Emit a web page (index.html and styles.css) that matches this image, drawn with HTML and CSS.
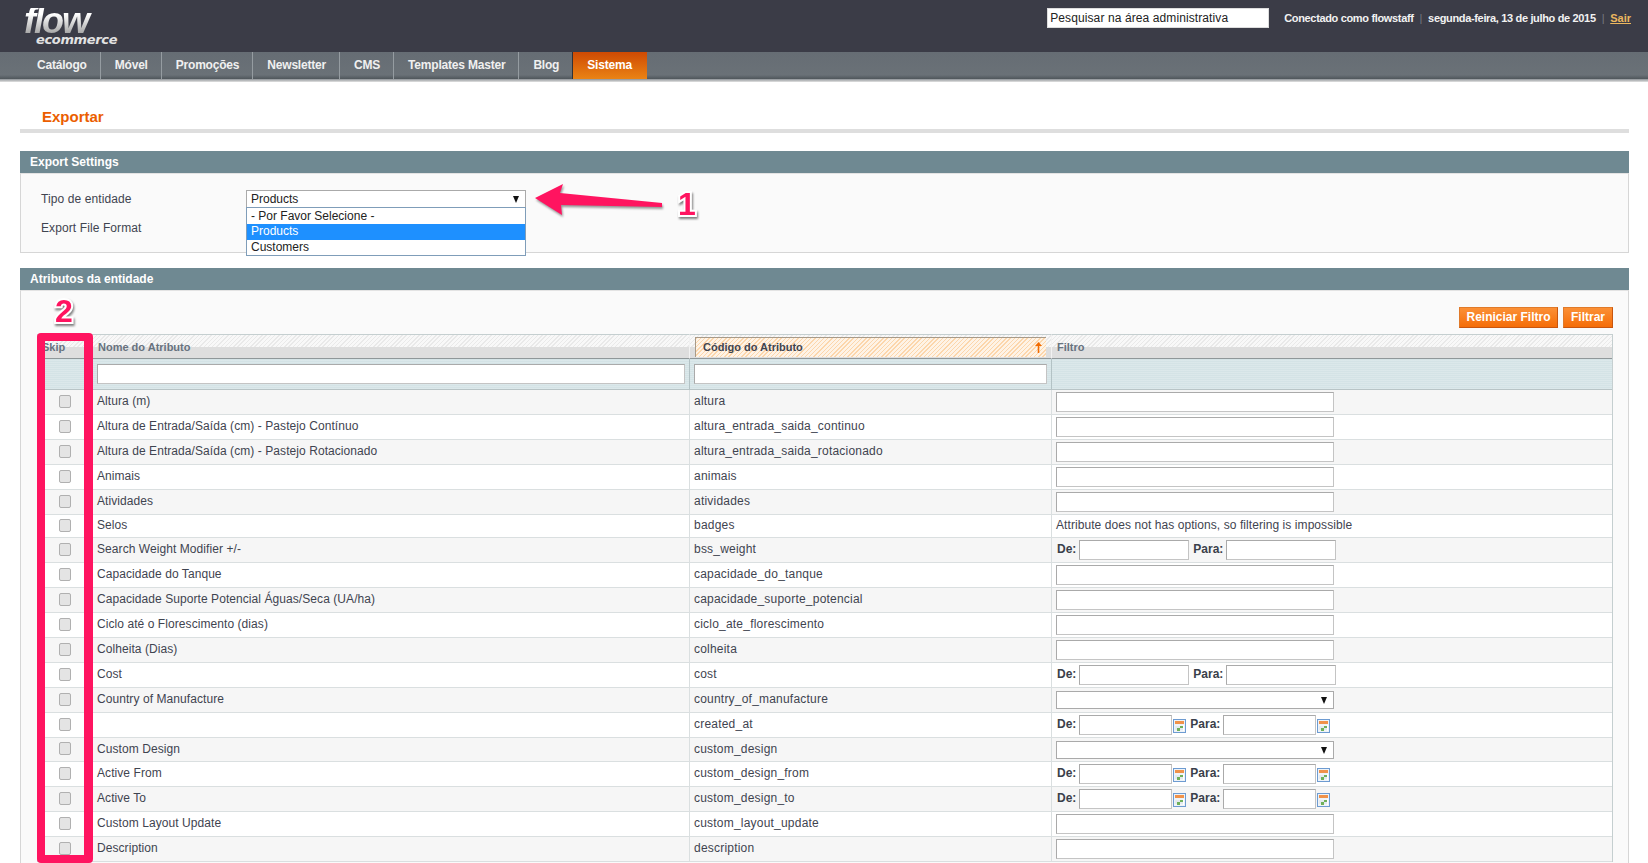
FILE: index.html
```html
<!DOCTYPE html>
<html lang="pt-BR">
<head>
<meta charset="utf-8">
<title>Exportar</title>
<link rel="stylesheet" href="styles.css">
</head>
<body>
<header class="topbar">
  <div class="logo"><span class="logo-flow">flow</span><span class="logo-sub">ecommerce</span></div>
  <div class="top-right">
    <input class="search" type="text" value="Pesquisar na área administrativa">
    <div class="user-info">
      <span>Conectado como flowstaff</span><i class="pipe">|</i><span>segunda-feira, 13 de julho de 2015</span><i class="pipe">|</i><a class="logout" href="#">Sair</a>
    </div>
  </div>
</header>
<nav class="nav">
  <a class="nav-item" href="#">Catálogo</a>
  <a class="nav-item" href="#">Móvel</a>
  <a class="nav-item" href="#">Promoções</a>
  <a class="nav-item" href="#">Newsletter</a>
  <a class="nav-item" href="#">CMS</a>
  <a class="nav-item" href="#">Templates Master</a>
  <a class="nav-item nav-last" href="#">Blog</a>
  <a class="nav-item nav-active" href="#">Sistema</a>
</nav>
<div class="nav-rule"></div>

<main class="main">
  <h1 class="title">Exportar</h1>

  <section class="panel">
    <h2 class="panel-head">Export Settings</h2>
    <div class="panel-body settings">
      <label class="field-label">Tipo de entidade</label>
      <div class="select-box">
        <span class="sel sel-wide">Products</span>
        <ul class="dropdown">
          <li>- Por Favor Selecione -</li>
          <li class="selected">Products</li>
          <li>Customers</li>
        </ul>
      </div>
      <label class="field-label">Export File Format</label>
      <div class="select-box"><span class="sel sel-wide"></span></div>
    </div>
  </section>

  <section class="panel">
    <h2 class="panel-head">Atributos da entidade</h2>
    <div class="panel-body attrs">
      <div class="actions">
        <button class="btn btn-reset">Reiniciar Filtro</button>
        <button class="btn btn-filter">Filtrar</button>
      </div>
      <table class="grid">
        <colgroup><col class="c1"><col class="c2"><col class="c3"><col class="c4"></colgroup>
        <thead>
          <tr class="heads">
            <th>Skip</th>
            <th>Nome do Atributo</th>
            <th class="sorted"><div class="sorted-in"><span>Código do Atributo</span><svg class="sort-arrow" width="7" height="11" viewBox="0 0 7 11"><path d="M3.5 0 7 4H4.3v7H2.7V4H0z" fill="#f26b00"/></svg></div></th>
            <th>Filtro</th>
          </tr>
          <tr class="filters">
            <th></th>
            <th><input class="inp inp-full" type="text"></th>
            <th><input class="inp inp-full" type="text"></th>
            <th></th>
          </tr>
        </thead>
        <tbody>
          <tr class="odd"><td class="ck"><input type="checkbox" class="cb"></td><td>Altura (m)</td><td class="code">altura</td><td><input class="inp inp-f" type="text"></td></tr>
          <tr><td class="ck"><input type="checkbox" class="cb"></td><td>Altura de Entrada/Saída (cm) - Pastejo Contínuo</td><td class="code">altura_entrada_saida_continuo</td><td><input class="inp inp-f" type="text"></td></tr>
          <tr class="odd"><td class="ck"><input type="checkbox" class="cb"></td><td>Altura de Entrada/Saída (cm) - Pastejo Rotacionado</td><td class="code">altura_entrada_saida_rotacionado</td><td><input class="inp inp-f" type="text"></td></tr>
          <tr><td class="ck"><input type="checkbox" class="cb"></td><td>Animais</td><td class="code">animais</td><td><input class="inp inp-f" type="text"></td></tr>
          <tr class="odd"><td class="ck"><input type="checkbox" class="cb"></td><td>Atividades</td><td class="code">atividades</td><td><input class="inp inp-f" type="text"></td></tr>
          <tr class="h23"><td class="ck"><input type="checkbox" class="cb"></td><td>Selos</td><td class="code">badges</td><td>Attribute does not has options, so filtering is impossible</td></tr>
          <tr class="odd"><td class="ck"><input type="checkbox" class="cb"></td><td>Search Weight Modifier +/-</td><td class="code">bss_weight</td><td><div class="range"><b>De:</b><input class="inp inp-num" type="text"><b class="para">Para:</b><input class="inp inp-num" type="text"></div></td></tr>
          <tr><td class="ck"><input type="checkbox" class="cb"></td><td>Capacidade do Tanque</td><td class="code">capacidade_do_tanque</td><td><input class="inp inp-f" type="text"></td></tr>
          <tr class="odd"><td class="ck"><input type="checkbox" class="cb"></td><td>Capacidade Suporte Potencial Águas/Seca (UA/ha)</td><td class="code">capacidade_suporte_potencial</td><td><input class="inp inp-f" type="text"></td></tr>
          <tr><td class="ck"><input type="checkbox" class="cb"></td><td>Ciclo até o Florescimento (dias)</td><td class="code">ciclo_ate_florescimento</td><td><input class="inp inp-f" type="text"></td></tr>
          <tr class="odd"><td class="ck"><input type="checkbox" class="cb"></td><td>Colheita (Dias)</td><td class="code">colheita</td><td><input class="inp inp-f" type="text"></td></tr>
          <tr><td class="ck"><input type="checkbox" class="cb"></td><td>Cost</td><td class="code">cost</td><td><div class="range"><b>De:</b><input class="inp inp-num" type="text"><b class="para">Para:</b><input class="inp inp-num" type="text"></div></td></tr>
          <tr class="odd"><td class="ck"><input type="checkbox" class="cb"></td><td>Country of Manufacture</td><td class="code">country_of_manufacture</td><td><span class="sel sel-f"></span></td></tr>
          <tr class="h24"><td class="ck"><input type="checkbox" class="cb"></td><td></td><td class="code">created_at</td><td><div class="range"><b>De:</b><input class="inp inp-date" type="text"><svg class="cal" viewBox="0 0 13 14"><use href="#cal"/></svg><b class="para">Para:</b><input class="inp inp-date" type="text"><svg class="cal" viewBox="0 0 13 14"><use href="#cal"/></svg></div></td></tr>
          <tr class="odd h24"><td class="ck"><input type="checkbox" class="cb"></td><td>Custom Design</td><td class="code">custom_design</td><td><span class="sel sel-f"></span></td></tr>
          <tr><td class="ck"><input type="checkbox" class="cb"></td><td>Active From</td><td class="code">custom_design_from</td><td><div class="range"><b>De:</b><input class="inp inp-date" type="text"><svg class="cal" viewBox="0 0 13 14"><use href="#cal"/></svg><b class="para">Para:</b><input class="inp inp-date" type="text"><svg class="cal" viewBox="0 0 13 14"><use href="#cal"/></svg></div></td></tr>
          <tr class="odd"><td class="ck"><input type="checkbox" class="cb"></td><td>Active To</td><td class="code">custom_design_to</td><td><div class="range"><b>De:</b><input class="inp inp-date" type="text"><svg class="cal" viewBox="0 0 13 14"><use href="#cal"/></svg><b class="para">Para:</b><input class="inp inp-date" type="text"><svg class="cal" viewBox="0 0 13 14"><use href="#cal"/></svg></div></td></tr>
          <tr><td class="ck"><input type="checkbox" class="cb"></td><td>Custom Layout Update</td><td class="code">custom_layout_update</td><td><input class="inp inp-f" type="text"></td></tr>
          <tr class="odd"><td class="ck"><input type="checkbox" class="cb"></td><td>Description</td><td class="code">description</td><td><input class="inp inp-f" type="text"></td></tr>
        </tbody>
      </table>
    </div>
  </section>
</main>

<svg class="sprite" width="0" height="0">
  <symbol id="cal" viewBox="0 0 13 14">
    <rect x=".5" y=".5" width="12" height="13" fill="#eef3f8" stroke="#6d9bd1"/>
    <rect x="2" y="2" width="9" height="3" fill="#f0924a"/>
    <rect x="2" y="6" width="9" height="6" fill="#fff"/>
    <path d="M3 6.5v5M5 6.5v5M7 6.5v5M9 6.5v5" stroke="#c8d4de" stroke-width="1"/>
    <rect x="7" y="7" width="3" height="2" fill="#6fb05a"/>
    <rect x="4" y="9" width="3" height="3" fill="#6fb05a"/>
  </symbol>
</svg>

<svg class="note-arrow" width="132" height="36" viewBox="0 0 132 36">
  <path d="M1 15 29 1 26 10 128 20 128 24 27 22 28 32Z" fill="#ff1460"/>
</svg>
<span class="note-num note-1">1</span>
<span class="note-num note-2">2</span>
<div class="note-frame"></div>
</body>
</html>
```

FILE: styles.css
```css
* { box-sizing: border-box; }
html, body { margin: 0; height: 863px; overflow: hidden; }
body {
  position: relative;
  background: #fff;
  font: 12px/16px "Liberation Sans", Arial, sans-serif;
  color: #3f4450;
}

/* top bar */
.topbar {
  height: 52px;
  background: #3b3c47;
  display: flex;
  justify-content: space-between;
  align-items: flex-start;
  padding: 8px 17px 0 24px;
}
.logo { width: 96px; }
.logo-flow {
  display: block;
  font: italic 700 36px/25px "Liberation Sans", Arial, sans-serif;
  letter-spacing: -2px;
  background: linear-gradient(#fff 25%, #a8a8a8 100%);
  -webkit-background-clip: text;
  background-clip: text;
  color: transparent;
}
.logo-sub {
  display: block;
  margin: 1px 0 0 12px;
  font: italic 700 13px/11px "DejaVu Sans", sans-serif;
  letter-spacing: -.35px;
  color: #e2e2e2;
}
.top-right { display: flex; align-items: center; gap: 15px; }
.search {
  width: 222px;
  height: 20px;
  padding: 0 2px;
  border: 1px solid #ddd;
  background: #fff;
  color: #222;
  font: 12px "Liberation Sans", Arial, sans-serif;
  letter-spacing: .1px;
}
.user-info { font-size: 11px; font-weight: 700; color: #f2f2f2; letter-spacing: -.34px; }
.pipe { font-style: normal; font-weight: 400; color: #77787f; margin: 0 6px; }
.logout { color: #ebb75f; letter-spacing: 0; }

/* nav */
.nav {
  height: 27px;
  display: flex;
  padding-left: 23px;
  background: linear-gradient(#666d74, #6a7177 85%, #4f565b);
}
.nav-item {
  padding: 0 13px 0 14px;
  line-height: 27px;
  font-weight: 700;
  letter-spacing: -.2px;
  color: #f0f0f0;
  text-decoration: none;
  border-right: 1px solid #959ca1;
}
.nav-last { border-right: 1px solid #2f3238; }
.nav-active {
  width: 74px;
  border: 0;
  color: #fff;
  background: linear-gradient(#cf4a03, #ea8314);
}
.nav-rule { height: 3px; background: linear-gradient(#8d9296, #e2e2e2); }

/* main */
.main { padding: 0 19px 0 20px; }
.title {
  margin: 0 0 18px;
  height: 51px;
  padding: 26px 0 0 22px;
  font-size: 15px;
  line-height: 18px;
  font-weight: 700;
  color: #eb5e00;
  border-bottom: 4px solid #dedede;
}
.panel { margin-bottom: 15px; }
.panel-head {
  margin: 0;
  height: 22px;
  padding-left: 10px;
  background: #6f8992;
  color: #fff;
  font-size: 12px;
  line-height: 22px;
  font-weight: 700;
}
.panel-body {
  background: #fafafa;
  border: 1px solid #d6d6d6;
  border-top-color: #e3e3e3;
}

/* settings form */
.settings {
  height: 80px;
  padding: 16px 0 0 20px;
  display: grid;
  grid-template-columns: 205px 280px;
  grid-auto-rows: 18px;
  row-gap: 11px;
  align-items: center;
}
.field-label { color: #3f4450; letter-spacing: .1px; }
.select-box { position: relative; }
.sel {
  display: block;
  position: relative;
  height: 18px;
  padding-left: 4px;
  border: 1px solid #aaa;
  background: #fff;
  line-height: 16px;
  color: #222;
}
.sel::after {
  content: "";
  position: absolute;
  right: 6px;
  top: 5px;
  border: 3.5px solid transparent;
  border-top: 7px solid #111;
  border-bottom: 0;
}
.sel-wide { width: 280px; }
.sel-f { width: 278px; margin-top: 2px; }
.dropdown {
  position: absolute;
  z-index: 2;
  left: 0;
  top: 17px;
  width: 280px;
  margin: 0;
  padding: 0;
  list-style: none;
  background: #fff;
  border: 1px solid #7f9db9;
  color: #222;
}
.dropdown li { height: 16px; padding-left: 4px; line-height: 15px; }
.dropdown li:first-child { line-height: 17px; }
.dropdown li:last-child { height: 15px; }
.dropdown .selected { background: #1e90ff; color: #fff; }

/* attribute grid */
.attrs { padding: 16px 14px 0 16px; height: 600px; }
.actions { display: flex; justify-content: flex-end; gap: 5px; margin: 0 1px 6px 0; }
.btn {
  height: 21px;
  padding: 0 0 1px;
  border: 1px solid #c8560f;
  border-left-color: #e07a2a;
  border-top-color: #e07a2a;
  background: linear-gradient(#fb9036, #f56d08);
  color: #fff;
  font: 700 12px "Liberation Sans", Arial, sans-serif;
}
.btn-reset { width: 99px; }
.btn-filter { width: 50px; }

.grid {
  table-layout: fixed;
  width: 1576px;
  border-collapse: separate;
  border-spacing: 0;
  border-left: 1px solid #c5cfd0;
  border-right: 1px solid #c5cfd0;
}
.c1 { width: 54px; }
.c2 { width: 598px; }
.c3 { width: 362px; }
.c4 { width: 560px; }

.heads th {
  height: 25px;
  padding: 0 0 0 6px;
  border-top: 1px solid #c5cfd0;
  border-bottom: 1px solid #8f9799;
  border-right: 1px solid #f2f2f2;
  background:
    linear-gradient(#dedede, #dedede) left bottom / 100% 11px no-repeat,
    repeating-linear-gradient(135deg, #e9e9e9 0 1px, #f8f8f8 1px 3px);
  text-align: left;
  font-size: 11px;
  line-height: 14px;
  font-weight: 700;
  color: #67727e;
}
.heads th:first-child { padding-left: 4px; }
.heads th:last-child { border-right: 0; padding-left: 5px; }
.heads .sorted { padding: 2px 5px 0 5px; }
.sorted-in {
  display: flex;
  justify-content: space-between;
  align-items: center;
  height: 20px;
  margin-top: -1px;
  padding: 0 4px 1px 7px;
  border-top: 1px solid #a89a88;
  border-left: 1px solid #a89a88;
  background: repeating-linear-gradient(135deg, #fcd6ab 0 1px, #fef3e6 1px 3px);
  color: #3f4450;
}
.sort-arrow { display: block; }

.filters th {
  height: 31px;
  padding: 0 4px 0 5px;
  border-bottom: 1px solid #b8c4c6;
  border-right: 1px solid #b3c2c5;
  background:
    repeating-linear-gradient(0deg, rgba(255,255,255,.18) 0 1px, transparent 1px 2px),
    #d4e3e6;
  font-weight: 400;
}
.filters th:nth-child(3) { padding-left: 4px; }
.filters th:last-child { border-right: 0; }

.grid td {
  height: 25px;
  padding: 0 4px 2px 5px;
  border-bottom: 1px solid #dadfe0;
  border-right: 1px solid #dadfe0;
  background: #fff;
  white-space: nowrap;
  color: #3f4450;
  letter-spacing: .07px;
}
.grid td.code { padding-left: 4px; letter-spacing: .21px; }
.grid td:last-child { border-right: 0; padding-left: 4px; }
.grid .odd td { background: #f6f6f6; }
.grid .h23 td { height: 23px; }
.grid .h24 td { height: 24px; }
.grid td.ck { padding-left: 4px; text-align: center; }
.cb {
  appearance: none;
  display: block;
  width: 12px;
  height: 13px;
  margin: 0 auto;
  border: 1px solid #b0b0b0;
  border-radius: 2px;
  background: #e4e4e4;
}

.inp {
  display: block;
  height: 20px;
  padding: 0 2px;
  border: 1px solid #aaa;
  border-right-color: #c4c4c4;
  border-bottom-color: #c4c4c4;
  background: #fff;
  font: 12px "Liberation Sans", Arial, sans-serif;
}
.inp-full { width: 100%; }
.inp-f { width: 278px; margin-top: 2px; }
.inp-num { width: 110px; }
.inp-date { width: 93px; }
.range { display: flex; align-items: center; gap: 3px; margin-top: 2px; color: #3a3f4a; letter-spacing: 0; }
.range b { font-weight: 700; padding-bottom: 2px; }
.range b:first-child { margin-left: 1px; }
.para { margin-left: 1px; }
.cal { width: 13px; height: 14px; margin: 2px 0 0 -2px; }
.sprite { position: absolute; }

/* annotations drawn over the screenshot */
.note-arrow {
  position: absolute;
  left: 534px;
  top: 183px;
  filter: drop-shadow(1px 2px 1px rgba(0,0,0,.4));
}
.note-num {
  position: absolute;
  font: 700 32px/32px "Liberation Sans", Arial, sans-serif;
  color: #ff1460;
  -webkit-text-stroke: 4px #fff;
  paint-order: stroke fill;
  filter: drop-shadow(1px 2px 1px rgba(0,0,0,.5));
}
.note-1 { left: 678px; top: 188px; }
.note-2 { left: 55px; top: 295px; }
.note-frame {
  position: absolute;
  left: 37px;
  top: 333px;
  width: 56px;
  height: 530px;
  border: 8px solid #ff1460;
  border-right-width: 9px;
  border-radius: 4px;
}
```
